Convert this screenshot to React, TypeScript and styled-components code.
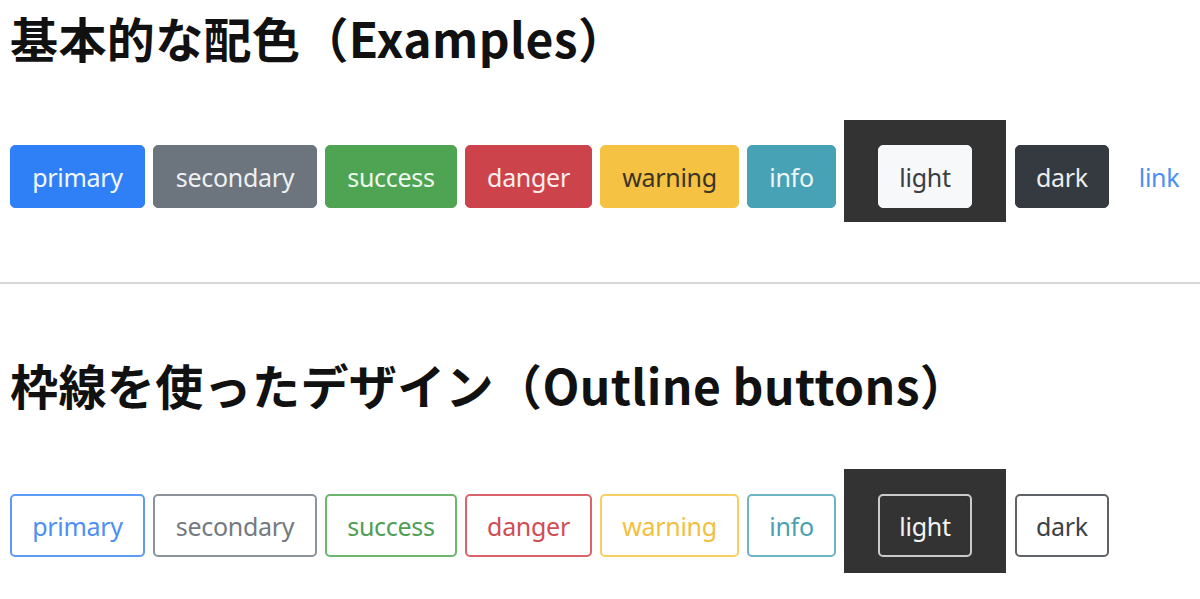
import React from "react";
import styled, { createGlobalStyle, css } from "styled-components";

const Global = createGlobalStyle`
  html, body { margin: 0; padding: 0; background: #fff; }
  body { font-family: "Noto Sans", "Noto Sans CJK JP", sans-serif; }
`;

const Page = styled.div`
  display: flex;
  flex-direction: column;
  width: 1200px;
  height: 599px;
  overflow: hidden;
`;

const Section = styled.section<{ $top: number }>`
  display: flex;
  flex-direction: column;
  padding: ${(p) => p.$top}px 0 0 10px;
`;

const Heading = styled.h2`
  margin: 0;
  font-family: "Noto Sans CJK JP", "Noto Sans", sans-serif;
  font-weight: 700;
  font-size: 48px;
  line-height: 55px;
  color: #111;
  letter-spacing: 0.4px;
`;

const Row = styled.div<{ $gap: number }>`
  display: flex;
  align-items: flex-start;
  gap: 8px;
  margin-top: ${(p) => p.$gap}px;
`;

type Variant =
  | "primary"
  | "secondary"
  | "success"
  | "danger"
  | "warning"
  | "info"
  | "light"
  | "dark"
  | "link";

const palette: Record<Variant, { bg: string; fg: string; line: string; outText: string }> = {
  primary: { bg: "#2f80f6", fg: "#f4f8ff", line: "#5c9cf7", outText: "#4d8ff5" },
  secondary: { bg: "#6c747d", fg: "#eef0f2", line: "#8d939a", outText: "#737a82" },
  success: { bg: "#4fa453", fg: "#eef8ee", line: "#6cb56f", outText: "#4f9e55" },
  danger: { bg: "#cd434b", fg: "#fbeeee", line: "#d9656b", outText: "#cf4d55" },
  warning: { bg: "#f6c244", fg: "#3b3422", line: "#f8cf63", outText: "#f3bf3f" },
  info: { bg: "#48a2b6", fg: "#eef7f9", line: "#6db5c5", outText: "#4b9fb3" },
  light: { bg: "#f7f8fa", fg: "#3a3d42", line: "#c9cbcd", outText: "#f4f4f4" },
  dark: { bg: "#343a40", fg: "#eceded", line: "#5f6367", outText: "#3c4146" },
  link: { bg: "transparent", fg: "#4a8ff5", line: "transparent", outText: "#4a8ff5" },
};

const Btn = styled.button<{ $v: Variant; $outline?: boolean; $w: number }>`
  box-sizing: border-box;
  width: ${(p) => p.$w}px;
  height: 63px;
  margin-top: 25px;
  padding: 0;
  border-radius: 5px;
  font-family: "Noto Sans", "Open Sans", sans-serif;
  font-size: 25px;
  font-weight: 400;
  letter-spacing: -0.3px;
  display: flex;
  align-items: center;
  justify-content: center;
  flex-shrink: 0;
  cursor: pointer;
  ${(p) =>
    p.$outline
      ? css`
          background: transparent;
          border: 2px solid ${palette[p.$v].line};
          color: ${palette[p.$v].outText};
        `
      : css`
          background: ${palette[p.$v].bg};
          border: 1px solid ${palette[p.$v].bg};
          color: ${palette[p.$v].fg};
        `}
`;

const DarkBox = styled.div<{ $bottom: number }>`
  display: flex;
  background: #333333;
  padding: 0 34px ${(p) => p.$bottom}px;
  margin-right: 1px;
`;

const Divider = styled.hr`
  margin: 60px 0 0;
  border: 0;
  height: 2px;
  background: #d6d6d6;
`;

const items: { v: Variant; w: number }[] = [
  { v: "primary", w: 135 },
  { v: "secondary", w: 164 },
  { v: "success", w: 132 },
  { v: "danger", w: 127 },
  { v: "warning", w: 139 },
  { v: "info", w: 89 },
];

export default function App() {
  return (
    <Page>
      <Global />
      <Section $top={10}>
        <Heading>基本的な配色（Examples）</Heading>
        <Row $gap={55}>
          {items.map((it) => (
            <Btn key={it.v} $v={it.v} $w={it.w}>
              {it.v}
            </Btn>
          ))}
          <DarkBox $bottom={14}>
            <Btn $v="light" $w={94}>
              light
            </Btn>
          </DarkBox>
          <Btn $v="dark" $w={94}>
            dark
          </Btn>
          <Btn $v="link" $w={84}>
            link
          </Btn>
        </Row>
      </Section>
      <Divider />
      <Section $top={73}>
        <Heading>枠線を使ったデザイン（Outline buttons）</Heading>
        <Row $gap={57}>
          {items.map((it) => (
            <Btn key={it.v} $v={it.v} $w={it.w} $outline>
              {it.v}
            </Btn>
          ))}
          <DarkBox $bottom={16}>
            <Btn $v="light" $w={94} $outline>
              light
            </Btn>
          </DarkBox>
          <Btn $v="dark" $w={94} $outline>
            dark
          </Btn>
        </Row>
      </Section>
    </Page>
  );
}
